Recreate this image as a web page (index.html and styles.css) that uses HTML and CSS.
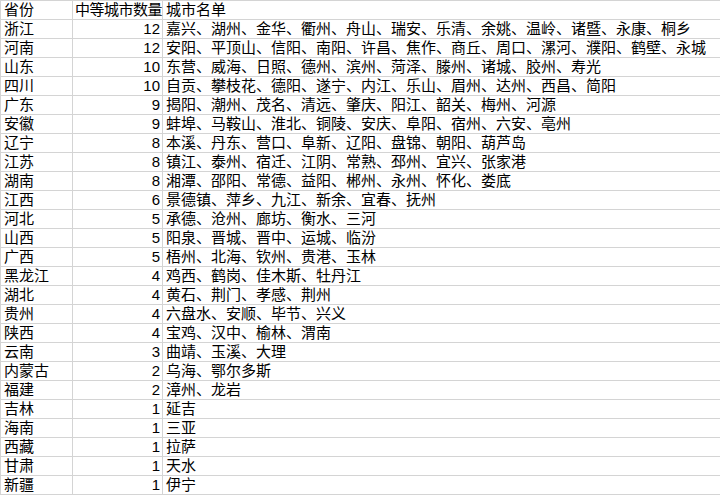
FILE: index.html
```html
<!DOCTYPE html>
<html lang="zh">
<head>
<meta charset="utf-8">
<title>中等城市数量</title>
<link rel="stylesheet" href="styles.css">
</head>
<body>
<table class="sheet">
  <colgroup>
    <col class="col-a">
    <col class="col-b">
    <col class="col-c">
  </colgroup>
  <tr><td>省份</td><td class="hdr">中等城市数量</td><td>城市名单</td></tr>
  <tr><td>浙江</td><td class="num">12</td><td>嘉兴、湖州、金华、衢州、舟山、瑞安、乐清、余姚、温岭、诸暨、永康、桐乡</td></tr>
  <tr><td>河南</td><td class="num">12</td><td>安阳、平顶山、信阳、南阳、许昌、焦作、商丘、周口、漯河、濮阳、鹤壁、永城</td></tr>
  <tr><td>山东</td><td class="num">10</td><td>东营、威海、日照、德州、滨州、菏泽、滕州、诸城、胶州、寿光</td></tr>
  <tr><td>四川</td><td class="num">10</td><td>自贡、攀枝花、德阳、遂宁、内江、乐山、眉州、达州、西昌、简阳</td></tr>
  <tr><td>广东</td><td class="num">9</td><td>揭阳、潮州、茂名、清远、肇庆、阳江、韶关、梅州、河源</td></tr>
  <tr><td>安徽</td><td class="num">9</td><td>蚌埠、马鞍山、淮北、铜陵、安庆、阜阳、宿州、六安、亳州</td></tr>
  <tr><td>辽宁</td><td class="num">8</td><td>本溪、丹东、营口、阜新、辽阳、盘锦、朝阳、葫芦岛</td></tr>
  <tr><td>江苏</td><td class="num">8</td><td>镇江、泰州、宿迁、江阴、常熟、邳州、宜兴、张家港</td></tr>
  <tr><td>湖南</td><td class="num">8</td><td>湘潭、邵阳、常德、益阳、郴州、永州、怀化、娄底</td></tr>
  <tr><td>江西</td><td class="num">6</td><td>景德镇、萍乡、九江、新余、宜春、抚州</td></tr>
  <tr><td>河北</td><td class="num">5</td><td>承德、沧州、廊坊、衡水、三河</td></tr>
  <tr><td>山西</td><td class="num">5</td><td>阳泉、晋城、晋中、运城、临汾</td></tr>
  <tr><td>广西</td><td class="num">5</td><td>梧州、北海、钦州、贵港、玉林</td></tr>
  <tr><td>黑龙江</td><td class="num">4</td><td>鸡西、鹤岗、佳木斯、牡丹江</td></tr>
  <tr><td>湖北</td><td class="num">4</td><td>黄石、荆门、孝感、荆州</td></tr>
  <tr><td>贵州</td><td class="num">4</td><td>六盘水、安顺、毕节、兴义</td></tr>
  <tr><td>陕西</td><td class="num">4</td><td>宝鸡、汉中、榆林、渭南</td></tr>
  <tr><td>云南</td><td class="num">3</td><td>曲靖、玉溪、大理</td></tr>
  <tr><td>内蒙古</td><td class="num">2</td><td>乌海、鄂尔多斯</td></tr>
  <tr><td>福建</td><td class="num">2</td><td>漳州、龙岩</td></tr>
  <tr><td>吉林</td><td class="num">1</td><td>延吉</td></tr>
  <tr><td>海南</td><td class="num">1</td><td>三亚</td></tr>
  <tr><td>西藏</td><td class="num">1</td><td>拉萨</td></tr>
  <tr><td>甘肃</td><td class="num">1</td><td>天水</td></tr>
  <tr><td>新疆</td><td class="num">1</td><td>伊宁</td></tr>
</table>
</body>
</html>
```

FILE: styles.css
```css
html, body {
  margin: 0;
  padding: 0;
  background: #ffffff;
}

.sheet {
  border-collapse: collapse;
  table-layout: fixed;
  width: 720px;
  font-family: "Liberation Sans", "Noto Sans CJK SC", sans-serif;
  font-size: 15px;
  color: #000000;
}

.col-a { width: 72px; }
.col-b { width: 90px; }
.col-c { width: 558px; }

.sheet td {
  border: 1px solid #d4d4d4;
  height: 18px;
  padding: 0 2px 0 3px;
  line-height: 18px;
  white-space: nowrap;
  overflow: hidden;
  vertical-align: bottom;
}

.sheet td.num {
  text-align: right;
  padding-right: 2px;
}

.sheet td.hdr {
  padding-left: 2px;
  padding-right: 0;
  letter-spacing: -0.5px;
  overflow: visible;
}
```
